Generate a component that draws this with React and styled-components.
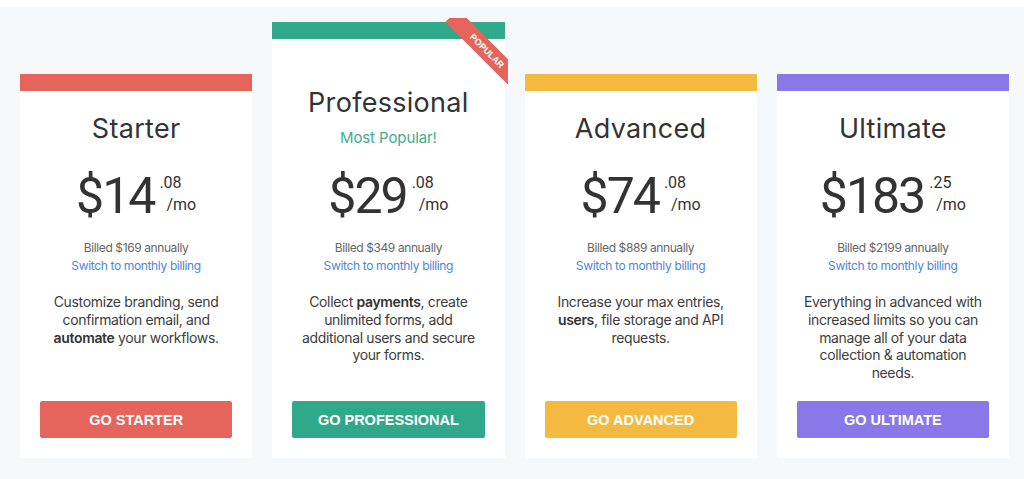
import React from "react"
import styled, { createGlobalStyle } from "styled-components"

const GlobalStyle = createGlobalStyle`
  html, body {
    margin: 0;
    padding: 0;
    background: #ffffff;
  }
  body {
    font-family: "Inter", "Open Sans", sans-serif;
    color: #333;
  }
`

const plans = [
  {
    name: "Starter",
    color: "#e5645b",
    dollars: "14",
    cents: "08",
    billed: "$169",
    desc: (
      <>
        Customize branding, send confirmation email, and <b>automate</b> your
        workflows.
      </>
    ),
    cta: "GO STARTER",
  },
  {
    name: "Professional",
    color: "#2fa98a",
    featured: true,
    dollars: "29",
    cents: "08",
    billed: "$349",
    desc: (
      <>
        Collect <b>payments</b>, create unlimited forms, add additional users
        and secure your forms.
      </>
    ),
    cta: "GO PROFESSIONAL",
  },
  {
    name: "Advanced",
    color: "#f4b941",
    dollars: "74",
    cents: "08",
    billed: "$889",
    desc: (
      <>
        Increase your max entries, <b>users</b>, file storage and API requests.
      </>
    ),
    cta: "GO ADVANCED",
  },
  {
    name: "Ultimate",
    color: "#8a77e8",
    dollars: "183",
    cents: "25",
    billed: "$2199",
    desc: (
      <>
        Everything in advanced with increased limits so you can manage all of
        your data collection &amp; automation needs.
      </>
    ),
    cta: "GO ULTIMATE",
  },
]

const PlanCard = ({ plan }) => {
  const { name, color, featured, dollars, cents, billed, desc, cta } = plan

  return (
    <Card $featured={featured}>
      <Bar $color={color} />
      {featured && (
        <Ribbon>
          <span>Popular</span>
        </Ribbon>
      )}
      <Body>
        <Title $featured={featured}>{name}</Title>
        {featured && <Tagline>Most Popular!</Tagline>}
        <Price>
          <Dollars>${dollars}</Dollars>
          <Cents>
            <span>.{cents}</span>
            <Per>/mo</Per>
          </Cents>
        </Price>
        <Billed>Billed {billed} annually</Billed>
        <Switch href="#">Switch to monthly billing</Switch>
        <Desc>{desc}</Desc>
        <Button $color={color}>{cta}</Button>
      </Body>
    </Card>
  )
}

const App = () => (
  <>
    <GlobalStyle />
    <Section>
      {plans.map(plan => (
        <PlanCard key={plan.name} plan={plan} />
      ))}
    </Section>
  </>
)

const Section = styled.section`
  margin-top: 7px;
  height: 472px;
  box-sizing: border-box;
  background: #f7f8fa;
  display: flex;
  align-items: stretch;
  gap: 20px;
  padding: 15px 15px 21px 20px;
`

const Card = styled.div`
  position: relative;
  flex: 1;
  min-width: 0;
  margin-top: ${p => (p.$featured ? "0" : "52px")};
  background: #fff;
  display: flex;
  flex-direction: column;
`

const Bar = styled.div`
  flex-shrink: 0;
  height: 17px;
  background: ${p => p.$color};
`

const Ribbon = styled.div`
  position: absolute;
  top: -4px;
  right: -3px;
  width: 66px;
  height: 66px;
  overflow: hidden;

  span {
    position: absolute;
    left: -5px;
    top: 24px;
    width: 100px;
    height: 18px;
    line-height: 18px;
    background: #e5645b;
    color: #fff;
    font-family: "Liberation Sans", sans-serif;
    font-size: 9px;
    font-weight: 700;
    text-transform: uppercase;
    text-align: center;
    transform: rotate(45deg);
  }
`

const Body = styled.div`
  flex: 1;
  display: flex;
  flex-direction: column;
  align-items: center;
  text-align: center;
  padding: 0 20px 20px;

  & > * {
    flex-shrink: 0;
  }
`

const Title = styled.h2`
  margin: ${p => (p.$featured ? "48px" : "22px")} 0 0;
  font-size: 27px;
  line-height: 32px;
  font-weight: 400;
  letter-spacing: 0.3px;
  color: #333;
`

const Tagline = styled.div`
  margin: 9px 0 -3px;
  font-size: 15px;
  line-height: 20px;
  letter-spacing: -0.1px;
  color: #44ab8e;
`

const Price = styled.div`
  margin-top: 26px;
  display: flex;
  align-items: flex-start;
  font-family: "Roboto", sans-serif;
  color: #333;
`

const Dollars = styled.div`
  font-size: 50px;
  line-height: 50px;
  font-weight: 400;
  letter-spacing: -2px;
`

const Cents = styled.div`
  margin-top: 3px;
  margin-left: 5px;
  display: flex;
  flex-direction: column;
  align-items: flex-start;
  font-size: 16px;
  line-height: 18px;
`

const Per = styled.span`
  margin-top: 4px;
  padding-left: 7px;
`

const Billed = styled.div`
  margin-top: 18px;
  font-size: 12px;
  line-height: 18px;
  letter-spacing: -0.4px;
  color: #666;
`

const Switch = styled.a`
  font-size: 12px;
  line-height: 18px;
  letter-spacing: -0.35px;
  color: #4a86e0;
  text-decoration: none;
`

const Desc = styled.p`
  margin: 18px 0 18px;
  max-width: 184px;
  font-size: 14px;
  line-height: 17.75px;
  letter-spacing: -0.35px;
  color: #3d3d3d;

  b {
    font-weight: 600;
    color: #333;
  }
`

const Button = styled.button`
  margin-top: auto;
  width: 100%;
  height: 37px;
  border: none;
  border-radius: 2px;
  background: ${p => p.$color};
  color: #fff;
  font-family: "Liberation Sans", sans-serif;
  font-size: 14.5px;
  font-weight: 700;
  cursor: pointer;
`

export default App
